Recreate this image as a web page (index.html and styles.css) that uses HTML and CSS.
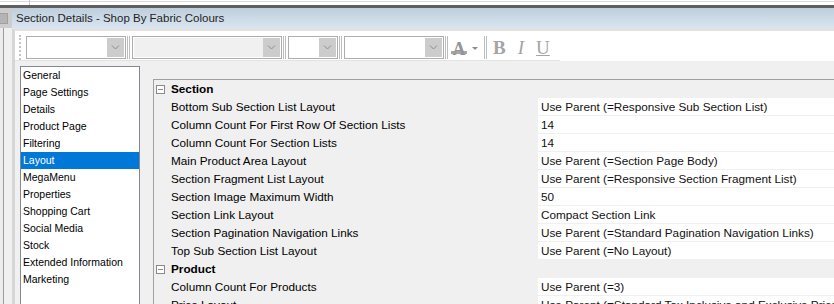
FILE: index.html
```html
<!DOCTYPE html>
<html lang="en">
<head>
  <meta charset="UTF-8" />
  <title>Section Details - Shop By Fabric Colours</title>
  <link rel="stylesheet" href="styles.css">
</head>
<body>
  <div class="top"><div class="top-cell"></div></div>

  <div class="frame">
    <div class="side">
      <div class="side-head"><span class="side-btn"></span></div>
      <div class="side-body"></div>
    </div>

    <div class="win">
      <div class="title">Section Details - Shop By Fabric Colours</div>

      <div class="win-body">
        <div class="toolbar">
          <span class="grip"></span>
          <div class="combo w-font"><span class="drop"><svg width="9" height="5" viewBox="0 0 9 5"><path d="M1 .5 4.5 4 8 .5" fill="none" stroke="#8c8c8c"/></svg></span></div>
          <span class="sep"></span>
          <div class="combo w-style off"><span class="drop"><svg width="9" height="5" viewBox="0 0 9 5"><path d="M1 .5 4.5 4 8 .5" fill="none" stroke="#8c8c8c"/></svg></span></div>
          <span class="sep"></span>
          <div class="combo w-size"><span class="drop"><svg width="9" height="5" viewBox="0 0 9 5"><path d="M1 .5 4.5 4 8 .5" fill="none" stroke="#8c8c8c"/></svg></span></div>
          <span class="sep"></span>
          <div class="combo w-face"><span class="drop"><svg width="9" height="5" viewBox="0 0 9 5"><path d="M1 .5 4.5 4 8 .5" fill="none" stroke="#8c8c8c"/></svg></span></div>
          <span class="sep"></span>
          <span class="fmt-color">A</span>
          <svg class="fmt-arrow" width="6" height="3" viewBox="0 0 6 3"><path d="M0 0h6L3 3z" fill="#8c8c8c"/></svg>
          <span class="sep"></span>
          <span class="fmt fmt-b">B</span>
          <span class="fmt fmt-i">I</span>
          <span class="fmt fmt-u">U</span>
        </div>

        <div class="content">
          <ul class="pages">
            <li>General</li>
            <li>Page Settings</li>
            <li>Details</li>
            <li>Product Page</li>
            <li>Filtering</li>
            <li class="selected">Layout</li>
            <li>MegaMenu</li>
            <li>Properties</li>
            <li>Shopping Cart</li>
            <li>Social Media</li>
            <li>Stock</li>
            <li>Extended Information</li>
            <li>Marketing</li>
          </ul>

          <div class="props">
            <div class="cat"><span class="toggle"></span>Section</div>
            <div class="row"><span class="name">Bottom Sub Section List Layout</span><span class="value">Use Parent (=Responsive Sub Section List)</span></div>
            <div class="row"><span class="name">Column Count For First Row Of Section Lists</span><span class="value">14</span></div>
            <div class="row"><span class="name">Column Count For Section Lists</span><span class="value">14</span></div>
            <div class="row"><span class="name">Main Product Area Layout</span><span class="value">Use Parent (=Section Page Body)</span></div>
            <div class="row"><span class="name">Section Fragment List Layout</span><span class="value">Use Parent (=Responsive Section Fragment List)</span></div>
            <div class="row"><span class="name">Section Image Maximum Width</span><span class="value">50</span></div>
            <div class="row"><span class="name">Section Link Layout</span><span class="value">Compact Section Link</span></div>
            <div class="row"><span class="name">Section Pagination Navigation Links</span><span class="value">Use Parent (=Standard Pagination Navigation Links)</span></div>
            <div class="row"><span class="name">Top Sub Section List Layout</span><span class="value">Use Parent (=No Layout)</span></div>
            <div class="cat"><span class="toggle"></span>Product</div>
            <div class="row"><span class="name">Column Count For Products</span><span class="value">Use Parent (=3)</span></div>
            <div class="row"><span class="name">Price Layout</span><span class="value">Use Parent (=Standard Tax Inclusive and Exclusive Price)</span></div>
          </div>
        </div>
      </div>
    </div>
  </div>
</body>
</html>
```

FILE: styles.css
```css
body {
  margin: 0;
  width: 834px;
  height: 304px;
  overflow: hidden;
  background: #f0f0f0;
  font-family: "Liberation Sans", Arial, sans-serif;
  color: #000;
}

/* strip above the window */
.top {
  height: 5px;
  background: linear-gradient(#fff 1px, #d9d9d9 1px, #d9d9d9 2px, #fff 2px);
}
.top-cell {
  width: 29px;
  height: 5px;
  border-right: 1px solid #c8c8c8;
}

.frame {
  display: flex;
  height: 296px;
  border-top: 3px solid #5f5f5f;
}

/* left dock edge */
.side {
  width: 12px;
  flex-shrink: 0;
  display: flex;
  flex-direction: column;
}
.side-head {
  height: 20px;
  background: #cdcdcd;
  padding-top: 5px;
  box-sizing: border-box;
}
.side-btn {
  display: block;
  width: 8px;
  height: 11px;
  background: #b4b4b4;
  border: 1px solid #a0a0a0;
  border-left: 0;
  box-sizing: border-box;
}
.side-body {
  flex: 1;
  background: linear-gradient(to right, #ececec 3px, #9c9c9c 3px, #9c9c9c 4px, #f0f0f0 4px);
}

.win {
  flex: 1;
  min-width: 0;
  display: flex;
  flex-direction: column;
}
.title {
  height: 20px;
  line-height: 21px;
  padding-left: 4px;
  font-size: 11.5px;
  color: #1e1e1e;
  background: linear-gradient(#bfcedc, #d9e5f1);
}
.win-body {
  flex: 1;
  min-height: 0;
  border-left: 3px solid #d6d6d6;
  border-top: 3px solid #e2e2e2;
  display: flex;
  flex-direction: column;
}

/* formatting toolbar */
.toolbar {
  height: 30px;
  flex-shrink: 0;
  display: flex;
  align-items: flex-start;
  padding: 4px 0 0 4px;
  box-sizing: border-box;
  background: #fff;
  border-bottom: 1px solid #e3e3e3;
  width: 545px;
  box-shadow: 300px 0 0 #fff;
}
.grip {
  width: 0;
  height: 25px;
  border-left: 2px dotted #c4c4c4;
  margin: 0 5px 0 0;
}
.combo {
  height: 23px;
  margin-top: 1px;
  border: 1px solid #adadad;
  background: #fff;
  box-sizing: border-box;
  display: flex;
  justify-content: flex-end;
}
.combo.off {
  background: #f0f0f0;
  box-shadow: inset 0 0 0 1px #fff;
}
.w-font { width: 100px; }
.w-style { width: 150px; }
.w-size { width: 50px; }
.w-face { width: 100px; }
.drop {
  width: 17px;
  margin: 1px;
  background: #cccccc;
  display: flex;
  align-items: center;
  justify-content: center;
}
.sep {
  width: 1px;
  height: 23px;
  margin: 1px 2px 0 1px;
  border-left: 1px solid #bdbdbd;
  border-right: 1px solid #bdbdbd;
}
.fmt-color {
  margin: 4px 0 0 1px;
  width: 16px;
  height: 12px;
  line-height: 14px;
  text-align: center;
  font: bold 18px "Liberation Serif", serif;
  color: #959595;
  border-bottom: 3px solid #a6a6a6;
}
.fmt-arrow {
  margin: 12px 5px 0 5px;
}
.fmt {
  margin-top: 3px;
  font: 19px/20px "Liberation Serif", serif;
  color: #a4a4a4;
}
.fmt-b {
  font-weight: bold;
  margin-left: 4px;
}
.fmt-i {
  font-style: italic;
  margin-left: 12px;
}
.fmt-u {
  text-decoration: underline;
  margin-left: 12px;
}

.content {
  flex: 1;
  display: flex;
  align-items: flex-start;
  padding: 5px 0 0 5px;
  min-height: 0;
  overflow: hidden;
}

/* page list */
.pages {
  list-style: none;
  margin: 0;
  padding: 0;
  width: 120px;
  height: 250px;
  flex-shrink: 0;
  box-sizing: border-box;
  background: #fff;
  border: 1px solid #828790;
  font-size: 10.5px;
}
.pages li {
  height: 17px;
  line-height: 17px;
  padding-left: 2px;
}
.pages li.selected {
  background: #0078d7;
  color: #fff;
}

/* property grid */
.props {
  flex: 1;
  min-width: 0;
  margin: 13px 0 0 13px;
  height: 240px;
  border-top: 1px solid #a0a0a0;
  border-left: 1px solid #a0a0a0;
  font-size: 11.75px;
}
.cat {
  height: 18px;
  line-height: 18px;
  font-weight: bold;
  display: flex;
  align-items: center;
  padding-left: 2px;
}
.toggle {
  width: 9px;
  height: 9px;
  margin-right: 6px;
  box-sizing: border-box;
  border: 1px solid #8a8a8a;
  background: linear-gradient(#8a8a8a, #8a8a8a) center / 5px 1px no-repeat #fff;
}
.row {
  display: flex;
  height: 18px;
}
.name {
  width: 366px;
  flex-shrink: 0;
  margin-left: 16px;
  padding-left: 1px;
  line-height: 17px;
  white-space: nowrap;
  overflow: hidden;
}
.value {
  flex: 1;
  height: 17px;
  line-height: 17px;
  margin-left: 1px;
  padding-left: 3px;
  background: #fff;
  white-space: nowrap;
  color: #111;
}
```
